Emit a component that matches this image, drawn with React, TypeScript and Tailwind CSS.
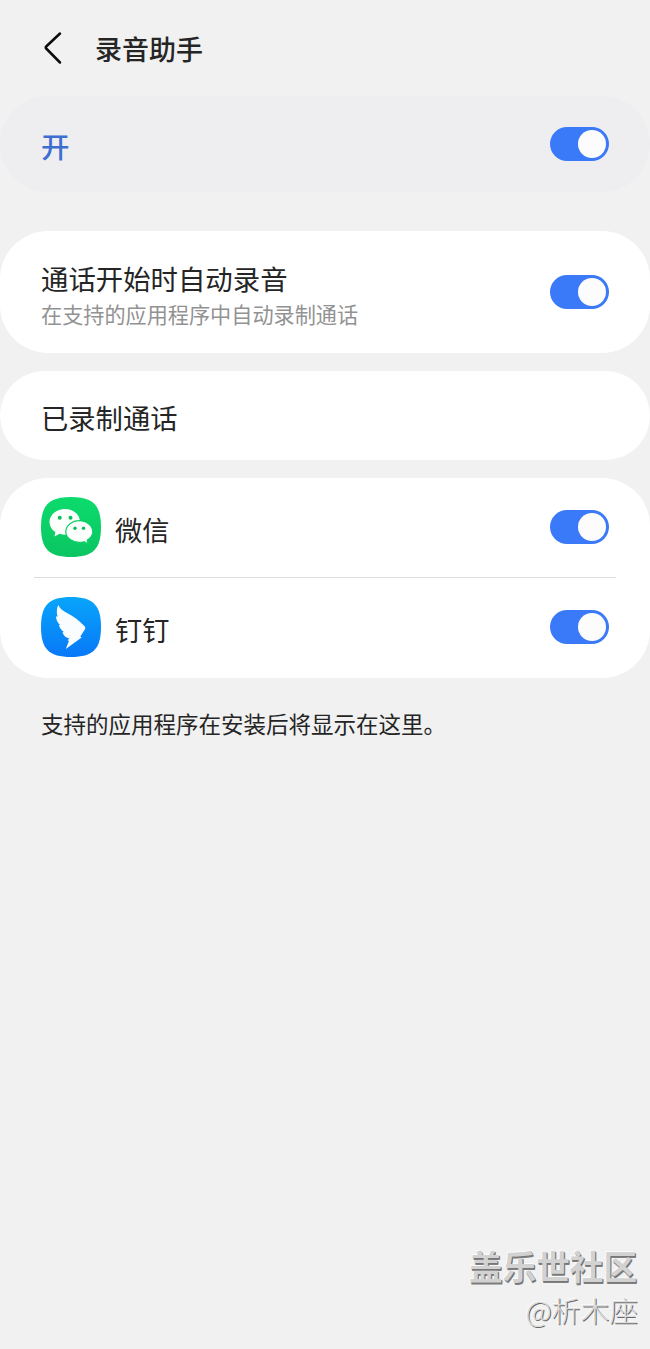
import React, { useState } from 'react';

interface ToggleProps {
  label: string;
}

const Toggle: React.FC<ToggleProps> = ({ label }) => {
  const [on, setOn] = useState(true);

  return (
    <button
      type="button"
      role="switch"
      aria-checked={on}
      aria-label={label}
      onClick={() => setOn(!on)}
      className={`flex h-[34px] w-[59px] shrink-0 items-center rounded-full px-[3px] ${
        on ? 'justify-end bg-[#3a79f8]' : 'justify-start bg-[#b8b8bc]'
      }`}
    >
      <span className="size-7 rounded-full bg-[#fcfcfc]" />
    </button>
  );
};

const WeChatIcon: React.FC = () => (
  <svg viewBox="0 0 60 60" className="size-[60px] shrink-0">
    <defs>
      <linearGradient id="wechat" x1="0" y1="0" x2="0" y2="1">
        <stop offset="0" stopColor="#0cdb6c" />
        <stop offset="1" stopColor="#0ac562" />
      </linearGradient>
    </defs>
    <path d="M30 0C52 0 60 8 60 30S52 60 30 60 0 52 0 30 8 0 30 0Z" fill="url(#wechat)" />
    <path
      d="M24 12C15.500 12 8.500 17.800 8.500 25c0 4.200 2.300 7.800 5.900 10.100L13.500 39.500l5.200-2.700c1.700.6 3.500.9 5.300.9 8.600 0 15-5.700 15-12.900S32.600 12 24 12Z"
      fill="#fcfffc"
    />
    <path
      d="M38.300 23.700c-7.300 0-13.500 4.900-13.500 11s6.200 10.700 13.500 10.700c1.700 0 3.300-.2 4.700-.7l4.400 2.300-1.200-3.800c3.200-2 5.600-4.900 5.600-8.500 0-6.100-6.200-11-13.500-11Z"
      fill="#fcfffc"
      stroke="#0bcf67"
      strokeWidth="1.200"
    />
    <g fill="#0bbd5c">
      <circle cx="18.700" cy="20.800" r="2" />
      <circle cx="29.500" cy="20.800" r="2" />
      <circle cx="34" cy="31.300" r="1.700" />
      <circle cx="42.500" cy="31.300" r="1.700" />
    </g>
  </svg>
);

const DingTalkIcon: React.FC = () => (
  <svg viewBox="0 0 60 60" className="size-[60px] shrink-0">
    <defs>
      <linearGradient id="dingtalk" x1="0" y1="0" x2="0" y2="1">
        <stop offset="0" stopColor="#08a5fb" />
        <stop offset="1" stopColor="#0878f8" />
      </linearGradient>
    </defs>
    <path d="M30 0C52 0 60 8 60 30S52 60 30 60 0 52 0 30 8 0 30 0Z" fill="url(#dingtalk)" />
    <path
      d="M17.300 8C15.500 11.500 15.400 16 16.600 19.600L15 19.500C15.200 23 16.600 25.800 19 27.800L18 28C18.600 31 20.500 33.500 23 34.900L21.400 35.200C22.500 38.600 25 40.800 28.500 41.500L26.500 43.300 28 43.700 24.800 52 40.600 40.600 39.300 39.400 43.800 32.600C44.500 31.400 44.400 30.200 43.600 29.300 37.500 23 32.500 19.300 26.500 16.300 22 14 19.200 12 17.300 8Z"
      fill="#fafdff"
    />
  </svg>
);

interface AppRowProps {
  name: string;
  icon: React.ReactNode;
}

const AppRow: React.FC<AppRowProps> = ({ name, icon }) => (
  <div className="flex items-center px-[41px]">
    {icon}
    <span className="mt-[3px] ml-[14px] flex-1 text-[27.200px] leading-9">{name}</span>
    <Toggle label={name} />
  </div>
);

export default function App() {
  return (
    <div className="flex h-[1349px] w-[650px] flex-col bg-[#f1f1f1] font-['Noto_Sans_CJK_SC',sans-serif] text-[#252525]">
      <header className="flex h-24 items-center pl-[43px]">
        <svg viewBox="0 0 20 34" className="mb-px h-[34px] w-5 shrink-0" fill="none" stroke="#0c0c0c" strokeWidth="2.500" strokeLinecap="round" strokeLinejoin="round">
          <path d="M17 2.500 3.200 15.500Q2.200 16.500 3.200 17.500L17 31.500" />
        </svg>
        <h1 className="mt-px ml-8 text-[27px] leading-9 font-medium">录音助手</h1>
      </header>

      <section className="flex h-24 items-center justify-between rounded-[48px] bg-[#eeeef1] px-[41px]">
        <span className="mt-[3px] text-[28.500px] leading-9 font-medium text-[#3d6ed0]">开</span>
        <Toggle label="录音助手" />
      </section>

      <section className="mt-[39px] flex h-[122px] items-center justify-between rounded-[48px] bg-white px-[41px]">
        <div className="mt-2">
          <h2 className="text-[27.400px] leading-9">通话开始时自动录音</h2>
          <p className="text-[21.150px] leading-9 text-[#929292]">在支持的应用程序中自动录制通话</p>
        </div>
        <Toggle label="通话开始时自动录音" />
      </section>

      <section className="mt-[18px] flex h-[89px] items-center rounded-[45px] bg-white px-[41px]">
        <h2 className="mt-[3px] text-[27.300px] leading-9">已录制通话</h2>
      </section>

      <section className="mt-[18px] h-[200px] rounded-[48px] bg-white pt-[19px]">
        <AppRow name="微信" icon={<WeChatIcon />} />
        <div className="mx-[34px] mt-5 mb-[19px] h-px bg-[#dcdcdc]" />
        <AppRow name="钉钉" icon={<DingTalkIcon />} />
      </section>

      <p className="mt-[27px] pl-[41px] text-[22.500px] leading-9">支持的应用程序在安装后将显示在这里。</p>

      <footer className="mt-auto flex flex-col items-end pr-3 pb-[17px]">
        <span className="pr-px text-[33.600px] leading-[44px] font-bold text-[#d2d2d2] [text-shadow:1px_1px_0_#777,1px_2px_0_#808080,-1px_-1px_0_#fafafa]">
          盖乐世社区
        </span>
        <span className="text-[28.800px] leading-[44px] font-light text-[#dadada] [text-shadow:1px_1px_0_#686868,-1px_-1px_0_#fafafa]">
          @析木座
        </span>
      </footer>
    </div>
  );
}
